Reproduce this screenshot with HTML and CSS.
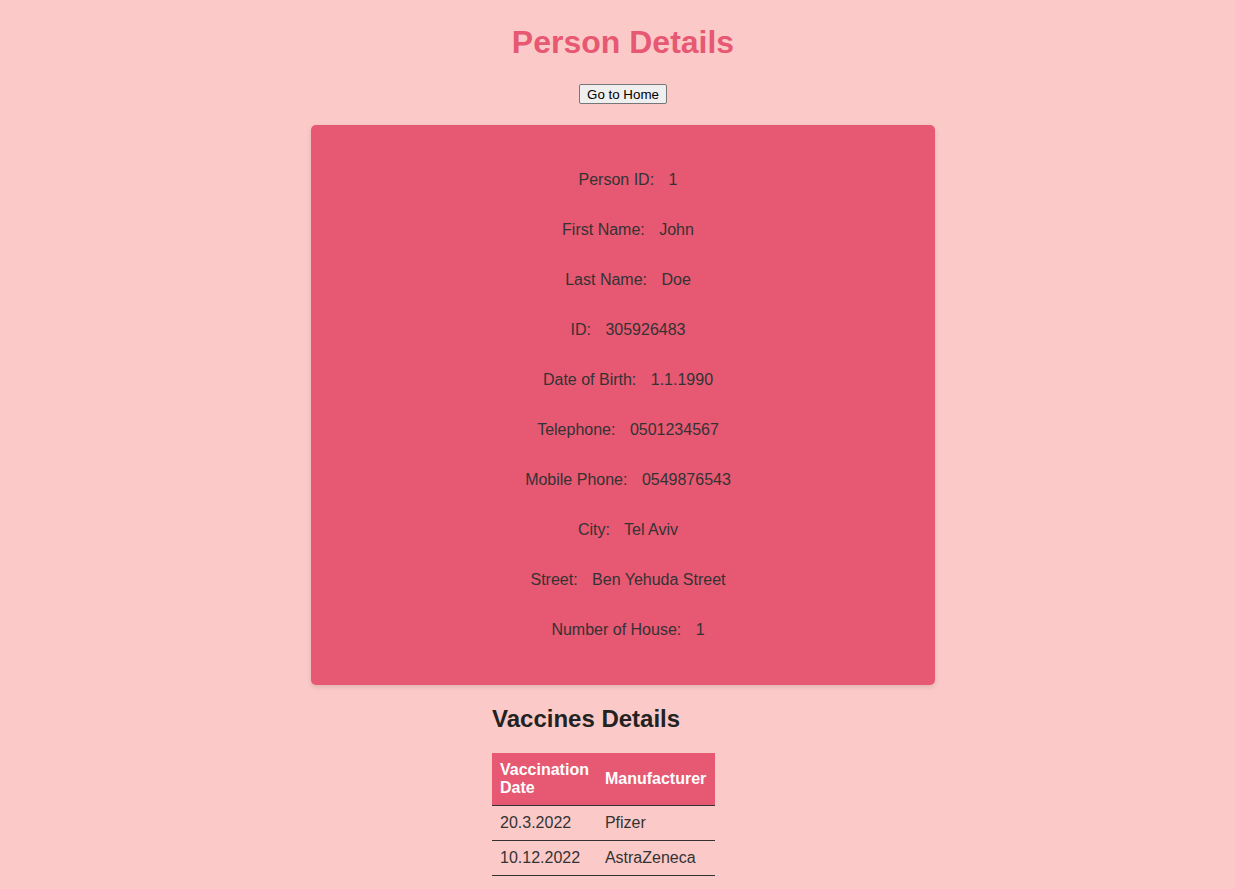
FILE: index.html
```html
<!DOCTYPE html>
<html lang="en">
<head>
<meta charset="utf-8">
<title>Person Details</title>
<link rel="stylesheet" href="styles.css">
</head>
<body>
<div class="page">
  <h1 class="title">Person Details</h1>
  <div class="actions"><button class="home-btn" type="button">Go to Home</button></div>
  <div class="card">
    <div class="row"><span class="label">Person ID:</span> <span class="value">1</span></div>
    <div class="row"><span class="label">First Name:</span> <span class="value">John</span></div>
    <div class="row"><span class="label">Last Name:</span> <span class="value">Doe</span></div>
    <div class="row"><span class="label">ID:</span> <span class="value">305926483</span></div>
    <div class="row"><span class="label">Date of Birth:</span> <span class="value">1.1.1990</span></div>
    <div class="row"><span class="label">Telephone:</span> <span class="value">0501234567</span></div>
    <div class="row"><span class="label">Mobile Phone:</span> <span class="value">0549876543</span></div>
    <div class="row"><span class="label">City:</span> <span class="value">Tel Aviv</span></div>
    <div class="row"><span class="label">Street:</span> <span class="value">Ben Yehuda Street</span></div>
    <div class="row"><span class="label">Number of House:</span> <span class="value">1</span></div>
  </div>
  <div class="vaccines">
    <h2 class="vaccines-title">Vaccines Details</h2>
    <table class="vtable">
      <thead>
        <tr><th>Vaccination Date</th><th>Manufacturer</th></tr>
      </thead>
      <tbody>
        <tr><td>20.3.2022</td><td>Pfizer</td></tr>
        <tr><td>10.12.2022</td><td>AstraZeneca</td></tr>
      </tbody>
    </table>
  </div>
</div>
</body>
</html>
```

FILE: styles.css
```css
html, body {
  margin: 0;
  padding: 0;
  background: #fbcac8;
}
body {
  font-family: "Liberation Sans", Arial, sans-serif;
  font-size: 16px;
  color: #333;
}
.page {
  padding-left: 11px;
  display: flex;
  flex-direction: column;
  align-items: center;
}
.title {
  margin: 24px 0 0;
  font-size: 32px;
  line-height: 37px;
  font-weight: bold;
  color: #e75873;
}
.actions {
  margin-top: 23px;
  height: 20px;
  display: flex;
}
.home-btn {
  font-family: "Liberation Sans", Arial, sans-serif;
  font-size: 13.33px;
  height: 20px;
  padding: 1px 7px;
  color: #000;
  background: #efefef;
  border: 1px solid #767676;
  border-radius: 2px;
}
.card {
  margin-top: 21px;
  width: 624px;
  box-sizing: border-box;
  background: #e75873;
  border-radius: 5px;
  box-shadow: 0 2px 5px rgba(0, 0, 0, 0.12);
  padding: 46px 0 46px;
  display: flex;
  flex-direction: column;
  align-items: center;
  gap: 32px;
}
.row {
  line-height: 18px;
  color: #333;
  padding-left: 10px;
}
.label {
  margin-right: 10px;
}
.vaccines {
  width: 262px;
}
.vaccines-title {
  margin: 20px 0 20px;
  font-size: 24px;
  line-height: 28px;
  font-weight: bold;
  color: #222;
}
.vtable {
  border-collapse: collapse;
  width: min-content;
}
.vtable th {
  background: #e75873;
  color: #fff;
  font-weight: bold;
  text-align: left;
  padding: 8px;
  line-height: 18px;
  border-bottom: 1px solid #333;
}
.vtable th + th {
  padding-right: 9px;
}
.vtable td {
  padding: 8px;
  line-height: 18px;
  border-bottom: 1px solid #333;
  white-space: nowrap;
  color: #333;
}
```
